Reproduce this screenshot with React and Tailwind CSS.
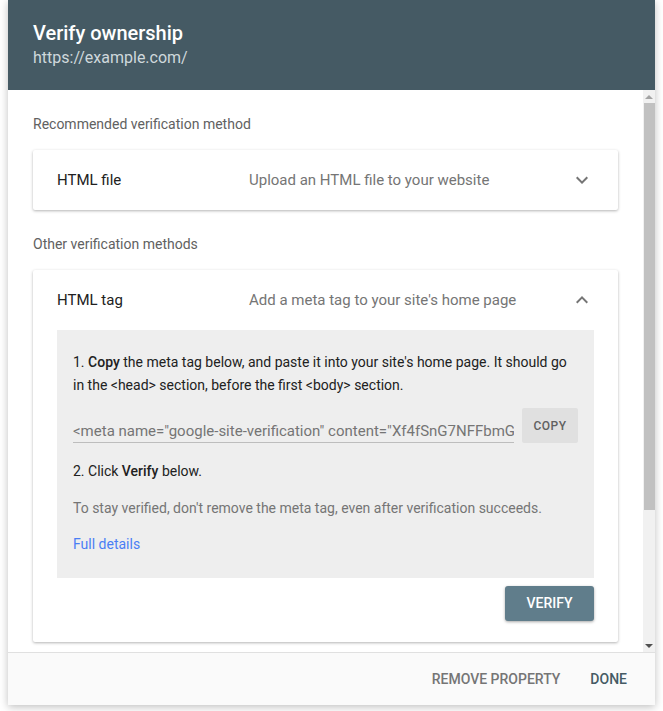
import React from 'react';

const font = { fontFamily: 'Roboto, "Noto Sans", Arial, sans-serif' };

const ChevronDown = () => (
  <svg width="24" height="24" viewBox="0 0 24 24" fill="#757575">
    <path d="M16.59 8.59L12 13.17 7.41 8.59 6 10l6 6 6-6z" />
  </svg>
);

const ChevronUp = () => (
  <svg width="24" height="24" viewBox="0 0 24 24" fill="#757575">
    <path d="M12 8l-6 6 1.41 1.41L12 10.83l4.59 4.58L18 14z" />
  </svg>
);

const MethodHeader = ({ title, desc, open }) => (
  <div className="flex h-[60px] items-center pl-6 pr-6">
    <div className="w-[192px] text-[15px] text-[#212121]">{title}</div>
    <div className="flex-1 text-[15px] text-[#757575]">{desc}</div>
    {open ? <ChevronUp /> : <ChevronDown />}
  </div>
);

const App = () => {
  return (
    <div className="w-[663px] h-[711px] bg-white overflow-hidden" style={font}>
      <div className="ml-2 w-[647px] h-[705px] flex flex-col bg-white shadow-[0_2px_8px_rgba(0,0,0,0.25)]">
        {/* Header */}
        <div className="h-[90px] shrink-0 bg-[#455a64] pl-[25px] pt-[19px]">
          <div className="text-[20px] font-medium leading-[28px] text-white">Verify ownership</div>
          <div className="text-[16px] leading-[22px] text-[#cfd8dc]">https://example.com/</div>
        </div>

        {/* Body with scrollbar */}
        <div className="flex flex-1 min-h-0">
          <div className="flex-1 overflow-hidden px-[25px] pt-6">
            <div className="text-[14px] leading-5 text-[#616161]">Recommended verification method</div>
            <div className="mt-4 bg-white rounded-[2px] shadow-[0_1px_3px_rgba(0,0,0,0.3)]">
              <MethodHeader title="HTML file" desc="Upload an HTML file to your website" />
            </div>

            <div className="mt-6 text-[14px] leading-5 text-[#616161]">Other verification methods</div>
            <div className="mt-4 bg-white rounded-[2px] shadow-[0_1px_3px_rgba(0,0,0,0.3)] pb-[21px]">
              <MethodHeader title="HTML tag" desc="Add a meta tag to your site's home page" open />
              <div className="mx-6 bg-[#eeeeee] px-4 pt-[21px] pb-6">
                <p className="text-[14px] leading-[23px] text-[#212121]">
                  1. <b className="font-medium">Copy</b> the meta tag below, and paste it into your site's home page. It should go in the &lt;head&gt; section, before the first &lt;body&gt; section.
                </p>
                <div className="mt-[11px] flex items-end gap-2">
                  <div className="flex-1 min-w-0 border-b border-[#bdbdbd] pb-[1px]">
                    <div className="whitespace-nowrap overflow-hidden text-[15px] leading-5 text-[#757575]">
                      &lt;meta name="google-site-verification" content="Xf4fSnG7NFFbmGwJ3nEDi4DhnQk0" /&gt;
                    </div>
                  </div>
                  <div className="w-[56px] h-[35px] shrink-0 flex items-center justify-center rounded-[2px] bg-[#e0e0e0] text-[12px] font-medium tracking-[0.5px] text-[#616161]">
                    COPY
                  </div>
                </div>
                <p className="mt-[18px] text-[14px] leading-5 text-[#212121]">
                  2. Click <b className="font-medium">Verify</b> below.
                </p>
                <p className="mt-[17px] text-[14px] leading-5 text-[#757575]">
                  To stay verified, don't remove the meta tag, even after verification succeeds.
                </p>
                <p className="mt-4 text-[14px] leading-5 text-[#4a7ef5]">Full details</p>
              </div>
              <div className="mx-6 mt-2 flex justify-end">
                <div className="w-[89px] h-[35px] flex items-center justify-center rounded-[3px] bg-[#607d8b] text-[14px] font-medium text-white shadow-[0_1px_3px_rgba(0,0,0,0.35)]">
                  VERIFY
                </div>
              </div>
            </div>
            <div className="h-[120px]" />
          </div>

          {/* Scrollbar */}
          <div className="w-3 shrink-0 bg-[#f1f1f1] flex flex-col items-center">
            <div className="h-[13px] flex items-center justify-center">
              <div className="w-0 h-0 border-l-[4px] border-r-[4px] border-b-[4px] border-l-transparent border-r-transparent border-b-[#a3a3a3]" />
            </div>
            <div className="w-[11px] h-[407px] bg-[#c1c1c1]" />
            <div className="flex-1" />
            <div className="h-[13px] flex items-center justify-center">
              <div className="w-0 h-0 border-l-[4px] border-r-[4px] border-t-[4px] border-l-transparent border-r-transparent border-t-[#505050]" />
            </div>
          </div>
        </div>

        {/* Footer */}
        <div className="h-[53px] shrink-0 border-t border-[#e0e0e0] bg-[#fafafa] flex items-center justify-end gap-[30px] pr-[28px]">
          <span className="text-[14px] font-medium text-[#757575]">REMOVE PROPERTY</span>
          <span className="text-[14px] font-medium text-[#455a64]">DONE</span>
        </div>
      </div>
    </div>
  );
};

export default App;
